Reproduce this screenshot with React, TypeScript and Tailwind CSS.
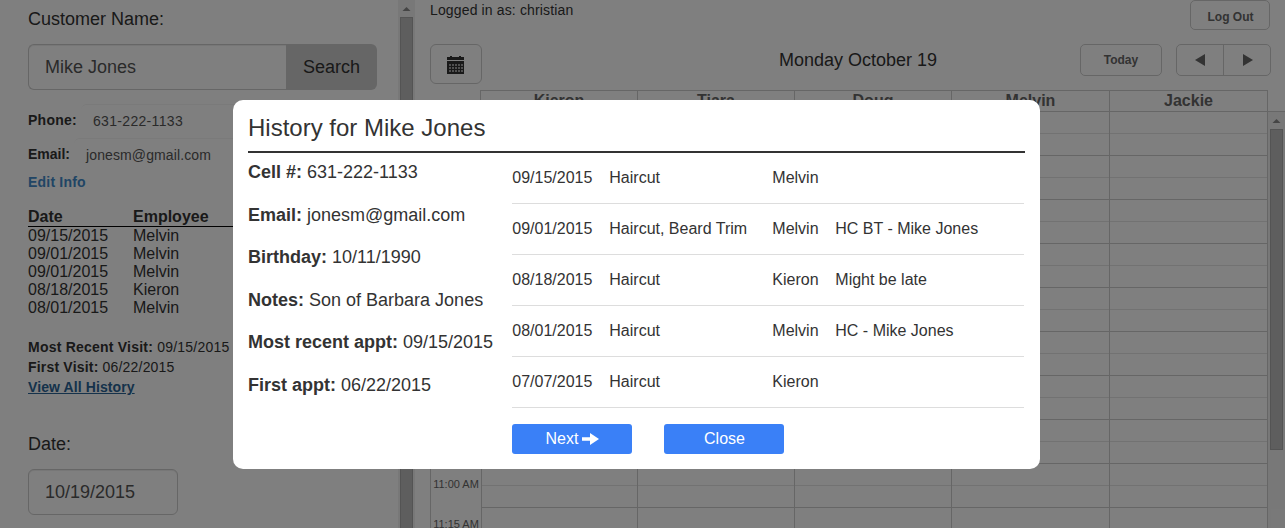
import React from "react";

const employees = ["Kieron", "Tiara", "Doug", "Melvin", "Jackie"];

const visits = [
  ["09/15/2015", "Melvin"],
  ["09/01/2015", "Melvin"],
  ["09/01/2015", "Melvin"],
  ["08/18/2015", "Kieron"],
  ["08/01/2015", "Melvin"],
];

const details = [
  ["Cell #:", "631-222-1133"],
  ["Email:", "jonesm@gmail.com"],
  ["Birthday:", "10/11/1990"],
  ["Notes:", "Son of Barbara Jones"],
  ["Most recent appt:", "09/15/2015"],
  ["First appt:", "06/22/2015"],
];

const appointments = [
  ["09/15/2015", "Haircut", "Melvin", ""],
  ["09/01/2015", "Haircut, Beard Trim", "Melvin", "HC BT - Mike Jones"],
  ["08/18/2015", "Haircut", "Kieron", "Might be late"],
  ["08/01/2015", "Haircut", "Melvin", "HC - Mike Jones"],
  ["07/07/2015", "Haircut", "Kieron", ""],
];

const times = ["11:00 AM", "11:15 AM"];
const slotRows = Array.from({ length: 10 }, (_, i) => i);

function Scrollbar({ thumb }: { thumb: string }) {
  return (
    <div className="flex w-[17px] shrink-0 flex-col items-center bg-[#f1f1f1]">
      <svg className="h-[17px] w-[17px] shrink-0" viewBox="0 0 17 17">
        <path d="M4.500 11 L8.500 7 L12.500 11 Z" fill="#8a8a8a" />
      </svg>
      <div className={`w-[13px] shrink-0 border border-[#a8a8a8] bg-[#bcbcbc] ${thumb}`} />
    </div>
  );
}

function CalendarIcon() {
  const cells = [0, 1, 2, 3, 4].flatMap((c) => [0, 1, 2].map((r) => [c, r]));
  return (
    <svg className="-ml-px mt-px" width="17" height="18" viewBox="0 0 17 18" shapeRendering="crispEdges">
      <path d="M0 4V1H3V0H5V1H12V0H14V1H17V4Z M0 5H17V18H0Z" fill="#333" />
      {cells.map(([c, r]) => (
        <rect key={`${c}-${r}`} x={2 + c * 3} y={8 + r * 3} width="2" height="2" fill="#a0a0a0" />
      ))}
    </svg>
  );
}

function Sidebar() {
  return (
    <aside className="flex w-[415px] shrink-0">
      <div className="w-[398px] pl-7">
        <div className="pt-2 text-lg leading-[22px]">Customer Name:</div>
        <div className="mt-[14px] flex h-[46px] w-[349px]">
          <div className="flex w-[258px] items-center rounded-l-md border border-r-0 border-[#ccc] pl-4 text-lg text-[#555] shadow-[inset_0_1px_1px_rgba(0,0,0,0.075)]">
            Mike Jones
          </div>
          <button className="w-[91px] rounded-r-md bg-[#ccc] text-lg">Search</button>
        </div>
        <div className="mt-[14px] flex h-[34px] items-start text-sm">
          <span className="w-[53px] pt-[6px] font-bold tracking-[0.25px]">Phone:</span>
          <div className="h-[30px] w-[200px] rounded-t-md border-t border-[#f4f4f4] pl-[12px] pt-[6px] tracking-[0.32px] text-[#555]">631-222-1133</div>
        </div>
        <div className="flex h-[34px] items-start text-sm">
          <span className="w-[46px] pt-[6px] font-bold">Email:</span>
          <div className="h-[30px] w-[200px] rounded-t-md border-t border-[#f4f4f4] pl-[12px] pt-[6px] tracking-[0.12px] text-[#555]">jonesm@gmail.com</div>
        </div>
        <div className="text-sm font-bold tracking-[0.2px] text-[#428bca]">Edit Info</div>
        <div className="mt-[15px] flex h-[20px] items-center border-b border-black text-base font-bold">
          <span className="w-[105px]">Date</span>
          <span>Employee</span>
        </div>
        {visits.map(([date, name], i) => (
          <div key={i} className="flex text-base leading-[18px]">
            <span className="w-[105px]">{date}</span>
            <span>{name}</span>
          </div>
        ))}
        <div className="mt-5 text-sm tracking-[0.22px]"><b>Most Recent Visit:</b> 09/15/2015</div>
        <div className="text-sm tracking-[0.19px]"><b>First Visit:</b> 06/22/2015</div>
        <div className="text-sm font-bold tracking-[0.1px] text-[#2a6496] underline">View All History</div>
        <div className="mt-9 text-lg leading-[22px]">Date:</div>
        <div className="mt-[14px] flex h-[46px] w-[150px] items-center rounded-md border border-[#ccc] pl-4 text-lg text-[#555] shadow-[inset_0_1px_1px_rgba(0,0,0,0.075)]">
          10/19/2015
        </div>
      </div>
      <Scrollbar thumb="h-[520px]" />
    </aside>
  );
}

function ScheduleGrid() {
  return (
    <div className="flex w-[838px] overflow-hidden border-l border-[#ccc]">
      <div className="w-[51px] shrink-0 border-r border-[#ccc] pt-[352px]">
        {times.map((time) => (
          <div key={time} className="flex h-10 items-center justify-center whitespace-nowrap text-[11px] leading-none text-[#666]">
            {time}
          </div>
        ))}
      </div>
      <div className="grid flex-1 grid-cols-[156px_157px_157px_158px_158px]">
        {employees.map((name) => (
          <div key={name} className="border-r border-[#ccc]">
            {slotRows.map((row) => (
              <div key={row} className="h-11 border-b border-[#ccc]">
                <div className="h-[22px] border-b border-[#e4e4e4]" />
              </div>
            ))}
          </div>
        ))}
      </div>
    </div>
  );
}

function Schedule() {
  return (
    <main className="flex min-w-0 flex-1 flex-col pl-[15px]">
      <div className="flex h-[44px] items-start justify-between pr-[15px]">
        <div className="text-sm tracking-[0.14px]">Logged in as: christian</div>
        <button className="h-[30px] w-[80px] rounded-[5px] border border-[#ccc] pl-px pt-[3px] text-xs font-bold text-[#666]">Log Out</button>
      </div>
      <div className="flex h-[46px] items-start pr-[14px]">
        <button className="flex h-10 w-[52px] items-center justify-center rounded-md border border-[#ccc]">
          <CalendarIcon />
        </button>
        <div className="w-[598px] pl-[154px] pt-[4px] text-center text-lg leading-6">Monday October 19</div>
        <button className="h-8 w-[82px] rounded-[5px] border border-[#ccc] text-xs font-bold text-[#666]">Today</button>
        <div className="ml-[14px] flex h-8 w-[95px] rounded-[5px] border border-[#ccc]">
          <div className="flex w-[47px] items-center justify-center border-r border-[#ccc]">
            <svg width="10" height="12" viewBox="0 0 10 12"><path d="M10 0V12L0 6Z" fill="#666" /></svg>
          </div>
          <div className="flex flex-1 items-center justify-center pl-px">
            <svg width="10" height="12" viewBox="0 0 10 12"><path d="M0 0V12L10 6Z" fill="#666" /></svg>
          </div>
        </div>
      </div>
      <div className="flex h-[22px] shrink-0 border-b border-[#ccc] pl-[50px]">
        <div className="grid w-[788px] grid-cols-[157px_157px_157px_158px_158px] border-l border-t border-[#ccc]">
          {employees.map((name) => (
            <div key={name} className="border-r border-[#ccc] text-center text-base font-bold leading-[19px] text-[#666]">{name}</div>
          ))}
        </div>
      </div>
      <div className="flex min-h-0 flex-1">
        <ScheduleGrid />
        <Scrollbar thumb="h-[321px]" />
      </div>
    </main>
  );
}

function HistoryDialog() {
  return (
    <section className="absolute left-[233px] top-[100px] h-[369px] w-[807px] rounded-[10px] bg-white px-[15px] pt-3">
      <h1 className="h-[41px] border-b-2 border-[#333] text-2xl">History for Mike Jones</h1>
      <div className="flex">
        <div className="w-[264px]">
          {details.map(([label, value]) => (
            <p key={label} className="h-[42.600px] pt-[5px] text-lg"><b>{label}</b> {value}</p>
          ))}
        </div>
        <div className="w-[512px]">
          {appointments.map((row, i) => (
            <div key={i} className="grid h-[51px] grid-cols-[97px_163px_63px_1fr] items-center border-b border-[#ddd] pl-[0.300px] text-base">
              {row.map((cell, j) => <span key={j}>{cell}</span>)}
            </div>
          ))}
          <div className="mt-4 flex gap-8 text-base text-white">
            <button className="flex h-[30px] w-[120px] items-center justify-center gap-[4px] rounded-[3px] bg-[#3a80f7] pl-px">
              Next
              <svg width="17" height="12" viewBox="0 0 17 12"><path d="M0 4.300H8V0L17 6L8 12V7.700H0Z" fill="#fff" /></svg>
            </button>
            <button className="h-[30px] w-[120px] rounded-[3px] bg-[#3a80f7] pl-px">Close</button>
          </div>
        </div>
      </div>
    </section>
  );
}

export default function App() {
  return (
    <div className="relative flex h-[528px] w-[1285px] overflow-hidden bg-white font-['Liberation_Sans',Arial,sans-serif] text-[#333]">
      <Sidebar />
      <Schedule />
      <div className="absolute inset-0 bg-black/50" />
      <HistoryDialog />
    </div>
  );
}
